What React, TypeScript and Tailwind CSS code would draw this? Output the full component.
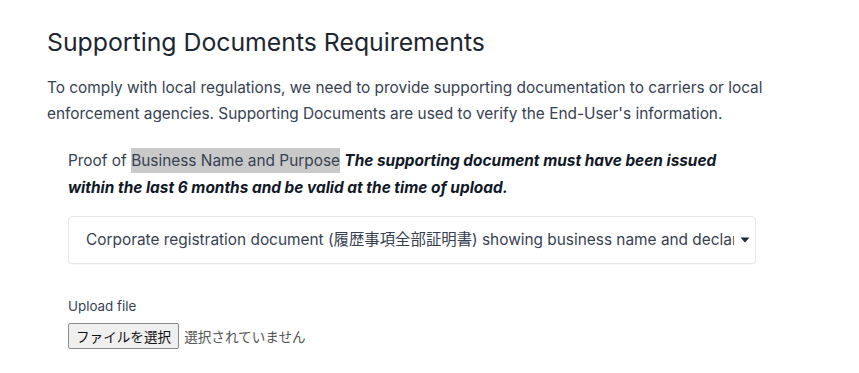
import * as React from 'react';

const sans = "font-['Inter','Noto_Sans_CJK_JP',sans-serif]";

function Caret() {
  return (
    <svg width="10" height="6" viewBox="0 0 10 6" className="shrink-0">
      <path d="M0.5 0.5 H9.5 L5 5.5 Z" fill="#1f2937" />
    </svg>
  );
}

export default function App() {
  return (
    <div className={`${sans} min-h-[373px] w-[859px] bg-white pl-[47px] pt-[27px] text-[#1f2937]`}>
      <h1 className="text-[24.8px] font-normal leading-[30px] text-[#1e2532]">
        Supporting Documents Requirements
      </h1>
      <p className="mt-[18px] w-[760px] text-[15.4px] leading-[26px] text-[#374151]">
        To comply with local regulations, we need to provide supporting documentation to carriers or local
        enforcement agencies. Supporting Documents are used to verify the End-User's information.
      </p>

      <div className="ml-[21px] mt-[20px] w-[688px]">
        <p className="w-[680px] text-[15.4px] leading-[27px] text-[#374151]">
          Proof of{' '}
          <span className="bg-[#c9c9c9] py-[3px]">Business Name and Purpose</span>{' '}
          <em className="font-bold text-[#111827]">
            The supporting document must have been issued within the last 6 months and be valid at the time of
            upload.
          </em>
        </p>

        <div className="mt-[15px] flex h-[48px] items-center gap-[6px] rounded-[4px] border border-[#e5e7eb] bg-white pl-[17px] pr-[5px] shadow-[0_1px_1px_rgba(0,0,0,0.03)]">
          <span className="w-[651px] overflow-hidden whitespace-nowrap text-[15.4px] text-[#374151]">
            Corporate registration document (履歴事項全部証明書) showing business name and declared purpose of the
            business
          </span>
          <Caret />
        </div>

        <div className="mt-[33px] text-[13.4px] leading-[18px] text-[#374151]">Upload file</div>
        <div className="mt-[8px] flex items-center gap-[5px] font-['Noto_Sans_CJK_JP',sans-serif] text-[13.6px]">
          <button className="h-[26px] rounded-[2px] border border-[#8a8a8a] bg-[#efefef] px-[7px] leading-[24px] text-[#111]">
            ファイルを選択
          </button>
          <span className="text-[#555]">選択されていません</span>
        </div>
      </div>
    </div>
  );
}
